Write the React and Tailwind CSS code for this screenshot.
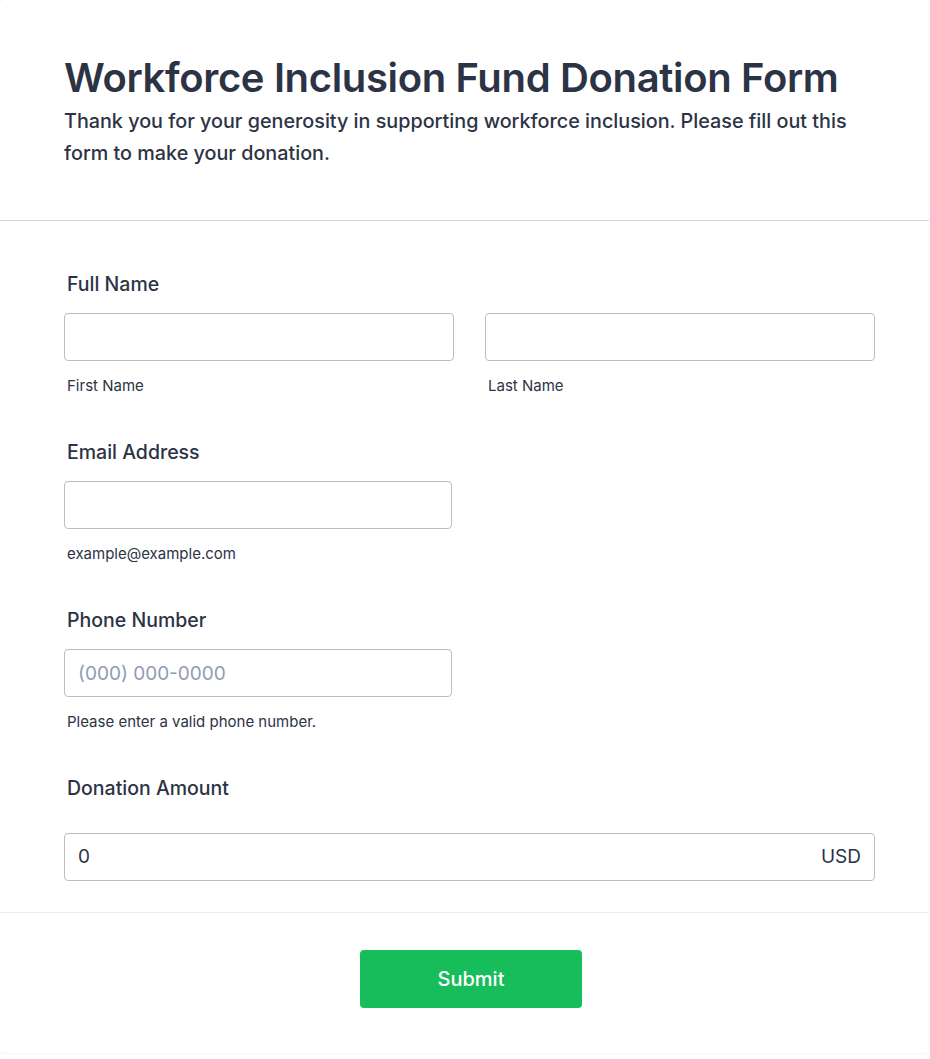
import React from "react";

function Field({ label, sub, children, className = "" }) {
  return (
    <div className={className}>
      <label className="block text-[19.5px] leading-[24px] font-medium text-[#2c3345] pl-[3px]">
        {label}
      </label>
      {children}
      {sub && (
        <p className="text-[15px] leading-[20px] text-[#2c3345] mt-[15px] pl-[3px]">{sub}</p>
      )}
    </div>
  );
}

function Input({ placeholder, className = "" }) {
  return (
    <input
      type="text"
      placeholder={placeholder}
      className={`h-[48px] rounded-[4px] border border-[#b8bdc9] bg-white px-[13px] text-[19px] text-[#2c3345] placeholder:text-[#8f9bb3] outline-none ${className}`}
    />
  );
}

export default function App() {
  return (
    <div className="min-h-screen bg-white font-['Inter',sans-serif]">
      <div className="w-[929px] rounded-[4px] bg-white shadow-[0_0_2px_rgba(40,40,60,0.12)] pb-[6px]">
        {/* Header */}
        <header className="h-[221px] border-b border-[#d3d3e3] px-[64px] pt-[54px]">
          <h1 className="text-[40px] leading-[48px] font-semibold text-[#2c3345] tracking-[-0.35px]">
            Workforce Inclusion Fund Donation Form
          </h1>
          <p className="mt-[3px] text-[19.75px] leading-[32px] font-medium text-[#2c3345] w-[800px]">
            Thank you for your generosity in supporting workforce inclusion. Please fill out this
            form to make your donation.
          </p>
        </header>

        {/* Form body */}
        <div className="px-[64px] pt-[51px] pb-[31px] border-b border-[#ebebf0] flex flex-col gap-[44px]">
          <div>
            <label className="block text-[19.5px] leading-[24px] font-medium text-[#2c3345] pl-[3px]">
              Full Name
            </label>
            <div className="mt-[17px] flex gap-[31px]">
              <div>
                <Input className="w-[390px]" />
                <p className="text-[15px] leading-[20px] text-[#2c3345] mt-[15px] pl-[3px]">First Name</p>
              </div>
              <div>
                <Input className="w-[390px]" />
                <p className="text-[15px] leading-[20px] text-[#2c3345] mt-[15px] pl-[3px]">Last Name</p>
              </div>
            </div>
          </div>

          <Field label="Email Address" sub="example@example.com">
            <Input className="mt-[17px] block w-[388px]" />
          </Field>

          <Field label="Phone Number" sub="Please enter a valid phone number.">
            <Input placeholder="(000) 000-0000" className="mt-[17px] block w-[388px]" />
          </Field>

          <Field label="Donation Amount">
            <div className="mt-[33px] w-[811px] h-[48px] rounded-[4px] border border-[#b8bdc9] flex items-center px-[13px]">
              <input
                type="text"
                defaultValue="0"
                className="flex-1 text-[19px] text-[#2c3345] outline-none bg-transparent"
              />
              <span className="text-[19px] text-[#2c3345]">USD</span>
            </div>
          </Field>
        </div>

        {/* Footer */}
        <div className="flex justify-center pl-[13px] pt-[37px] pb-[39px]">
          <button className="w-[222px] h-[58px] rounded-[4px] bg-[#18bd5b] text-white text-[20px] font-medium">
            Submit
          </button>
        </div>
      </div>
    </div>
  );
}
